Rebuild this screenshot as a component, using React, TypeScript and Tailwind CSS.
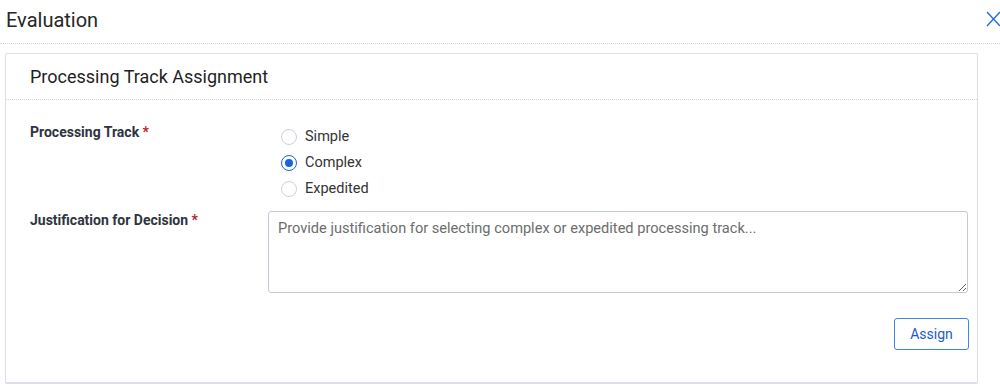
import { useState } from 'react';

const tracks = ['Simple', 'Complex', 'Expedited'];

export default function App() {
  const [track, setTrack] = useState('Complex');

  return (
    <div className="w-[1000px] h-[389px] bg-white overflow-hidden font-['Roboto',sans-serif] text-[#2b2b2b]">
      {/* Dialog header */}
      <div className="h-[44px] flex items-center justify-between pl-[6px] border-b border-dotted border-[#d6d6de]">
        <h2 className="text-[20px] leading-none text-[#262626] -mt-[3px]">Evaluation</h2>
        <button className="w-[14px] h-[16px] -mt-[5px] text-[#1f6fd6]" aria-label="Close">
          <svg viewBox="0 0 14 16" className="w-[14px] h-[16px]" fill="none" stroke="currentColor" strokeWidth="1.4">
            <path d="M1 1 L14 15 M14 1 L1 15" />
          </svg>
        </button>
      </div>

      {/* Card */}
      <div className="ml-[5px] mt-[9px] w-[973px] border border-[#dedee8] border-b-2 rounded-[2px]">
        <div className="h-[46px] flex items-center pl-[24px] border-b border-dotted border-[#d6d6de]">
          <h3 className="text-[18px] text-[#1f1f1f]">Processing Track Assignment</h3>
        </div>

        <div className="pl-[24px] pr-[8px] pt-[22px] pb-[32px]">
          <div className="grid grid-cols-[238px_1fr]">
            <label className="text-[14px] font-bold text-[#2e3440] leading-[20px]">
              Processing Track <span className="text-[#b5262b]">*</span>
            </label>
            <div className="flex flex-col pl-[13px] pt-[2px]">
              {tracks.map((t) => {
                const checked = track === t;
                return (
                  <label key={t} className="flex items-center gap-[8px] h-[26px] cursor-pointer" onClick={() => setTrack(t)}>
                    <span
                      className={
                        checked
                          ? 'w-[16px] h-[16px] rounded-full border border-[#1765d8] flex items-center justify-center'
                          : 'w-[16px] h-[16px] rounded-full border border-[#cdd1dc]'
                      }
                    >
                      {checked && <span className="w-[8px] h-[8px] rounded-full bg-[#1765d8]" />}
                    </span>
                    <span className="text-[14.5px] text-[#333]">{t}</span>
                  </label>
                );
              })}
            </div>

            <label className="text-[14px] font-bold text-[#2e3440] leading-[20px] mt-[8px]">
              Justification for Decision <span className="text-[#b5262b]">*</span>
            </label>
            <textarea
              className="mt-[9px] h-[82px] w-[700px] border border-[#c4c8d8] rounded-[3px] px-[9px] py-[6px] text-[14.6px] leading-[20px] placeholder:text-[#6d6d6d] outline-none resize-y"
              placeholder="Provide justification for selecting complex or expedited processing track..."
            />
          </div>

          <div className="flex justify-end mt-[25px]">
            <button className="w-[75px] h-[32px] border border-[#3a86e8] rounded-[3px] text-[14px] text-[#1a5ccc] bg-white">
              Assign
            </button>
          </div>
        </div>
      </div>
    </div>
  );
}
